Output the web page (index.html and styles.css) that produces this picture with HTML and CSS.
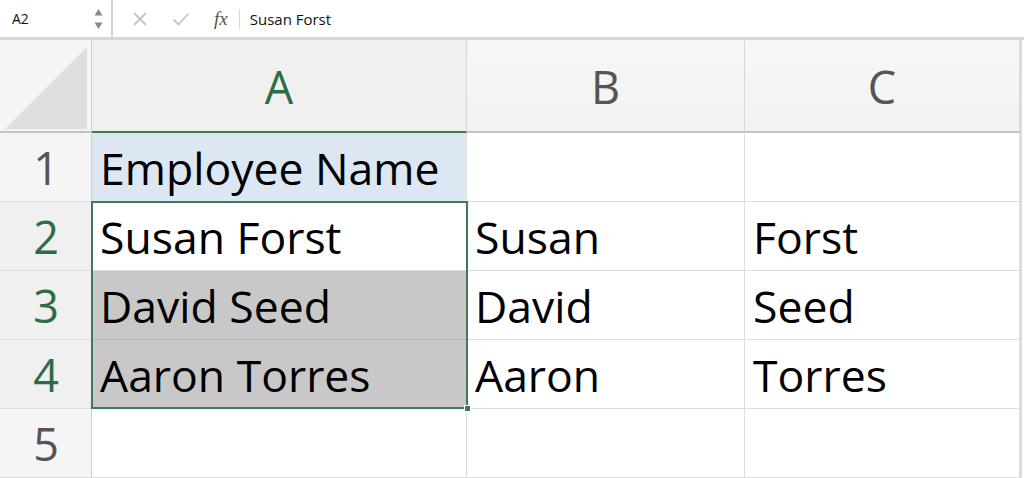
FILE: index.html
```html
<!DOCTYPE html>
<html>
<head>
<meta charset="utf-8">
<link rel="stylesheet" href="styles.css">
</head>
<body>
<div class="app">
  <div class="fbar">
    <div class="namebox">
      <span class="nb-text">A2</span>
      <span class="nb-arrows">
        <svg width="9" height="22" viewBox="0 0 9 22"><path d="M4.5 1 L8.5 7.5 L0.5 7.5 Z" fill="#8a8a8a"/><path d="M4.5 21 L8.5 14.5 L0.5 14.5 Z" fill="#8a8a8a"/></svg>
      </span>
    </div>
    <div class="ficons">
      <svg class="ic-x" width="16" height="16" viewBox="0 0 16 16"><path d="M2 2 L14 14 M14 2 L2 14" stroke="#c4c4c4" stroke-width="1.8" fill="none"/></svg>
      <svg class="ic-ok" width="18" height="16" viewBox="0 0 18 16"><path d="M1.5 8.5 L6.5 13.5 L16.5 2.5" stroke="#c4c4c4" stroke-width="1.8" fill="none"/></svg>
      <span class="fx">fx</span>
      <span class="fsep"></span>
    </div>
    <div class="ftext">Susan Forst</div>
  </div>
  <div class="grid">
    <div class="corner"><svg width="90" height="90" viewBox="0 0 90 90"><path d="M86 6 L86 88 L4 88 Z" fill="#dedede"/></svg></div>
    <div class="colh sel">A</div>
    <div class="colh">B</div>
    <div class="colh lastc">C</div>

    <div class="rowh">1</div>
    <div class="cell a1">Employee Name</div>
    <div class="cell"></div>
    <div class="cell lastc"></div>

    <div class="rowh sel">2</div>
    <div class="cell">Susan Forst</div>
    <div class="cell">Susan</div>
    <div class="cell lastc">Forst</div>

    <div class="rowh sel">3</div>
    <div class="cell gray">David Seed</div>
    <div class="cell">David</div>
    <div class="cell lastc">Seed</div>

    <div class="rowh sel">4</div>
    <div class="cell gray">Aaron Torres</div>
    <div class="cell">Aaron</div>
    <div class="cell lastc">Torres</div>

    <div class="rowh">5</div>
    <div class="cell"></div>
    <div class="cell"></div>
    <div class="cell lastc"></div>

    <div class="selbox"><span class="handle"></span></div>
  </div>
</div>
</body>
</html>
```
FILE: styles.css
```css
* { box-sizing: border-box; }
html, body { margin: 0; padding: 0; background: #fff; }
body { width: 1024px; height: 478px; overflow: hidden; font-family: "Open Sans", sans-serif; }
.app { display: flex; flex-direction: column; }

.fbar {
  height: 40px;
  display: flex;
  align-items: stretch;
  border-bottom: 3px solid #d6d6d6;
  background: #fff;
}
.namebox {
  width: 113px;
  display: flex;
  align-items: center;
  justify-content: space-between;
  padding: 0 8px 0 12px;
  border-right: 2px solid #d4d4d4;
  height: 37px;
}
.nb-text { font-family: "Open Sans", sans-serif; font-size: 14px; color: #111; }
.nb-arrows { display: flex; align-items: center; }
.ficons {
  display: flex;
  align-items: center;
  padding-left: 19px;
  height: 37px;
}
.ic-x { margin-right: 24px; }
.ic-ok { margin-right: 24px; }
.fx { font-family: "Liberation Serif", serif; font-style: italic; font-size: 19px; color: #555; }
.fsep { width: 1px; height: 20px; background: #d8d8d8; margin-left: 11px; }
.ftext { display: flex; align-items: center; height: 37px; padding-left: 10px; font-family: "Open Sans", sans-serif; font-size: 15px; color: #111; }

.grid {
  position: relative;
  display: grid;
  grid-template-columns: 92px 375px 278px 277px;
  grid-template-rows: 93px repeat(5, 69px);
}
.corner {
  background: #f5f5f5;
  border-right: 1px solid #cfcfcf;
  border-bottom: 2px solid #c4c4c4;
  display: flex;
  align-items: flex-end;
  justify-content: flex-end;
  overflow: hidden;
}
.corner svg { display: block; }
.colh {
  background: linear-gradient(#f7f7f7, #f2f2f2);
  border-right: 1px solid #d8d8d8;
  border-bottom: 2px solid #c4c4c4;
  display: flex;
  align-items: center;
  justify-content: center;
  font-family: "Open Sans", sans-serif;
  font-size: 45px;
  color: #555;
  padding-top: 2px;
}
.colh.sel { color: #2e6c45; border-bottom: 2px solid #3f7a54; background: #f0f0f0; }
.rowh {
  background: #f5f5f5;
  border-right: 1px solid #cfcfcf;
  border-bottom: 1px solid #dedede;
  display: flex;
  align-items: center;
  justify-content: center;
  font-family: "Open Sans", sans-serif;
  font-size: 45px;
  color: #555;
  padding-left: 1px;
}
.rowh.sel { color: #2e6c45; background: #f0f0f0; }
.cell {
  border-right: 1px solid #dedede;
  border-bottom: 1px solid #dedede;
  display: flex;
  align-items: center;
  padding: 0 0 0 8px;
  font-family: "Open Sans", sans-serif;
  font-size: 44.5px;
  color: #000;
  white-space: nowrap;
  overflow: hidden;
}
.lastc { border-right: 3px solid #dcdcdc; }
.a1 { background: #dde7f4; }
.gray { background: #c8c8c8; border-bottom-color: #b8b8b8; }

.selbox {
  position: absolute;
  left: 91px;
  top: 161px;
  width: 377px;
  height: 208px;
  border: 2px solid #3f7a54;
  pointer-events: none;
}
.handle {
  position: absolute;
  right: -5px;
  bottom: -5px;
  width: 7px;
  height: 7px;
  background: #3f7a54;
  border: 1px solid #fff;
}
```
